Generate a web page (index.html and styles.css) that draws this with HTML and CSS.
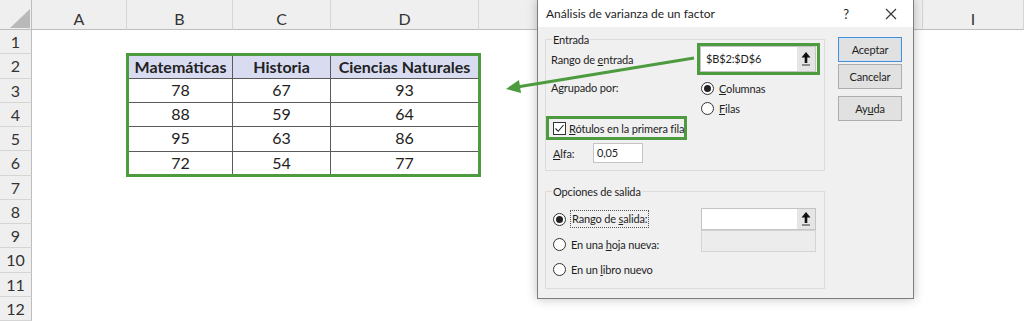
FILE: index.html
```html
<!DOCTYPE html>
<html lang="es">
<head>
<meta charset="UTF-8">
<title>Análisis de varianza de un factor</title>
<link rel="stylesheet" href="styles.css">
</head>
<body>

<div class="sheet">
    <div class="corner"><span class="corner-tri"></span></div>
    <div class="col-h">A</div>
    <div class="col-h">B</div>
    <div class="col-h">C</div>
    <div class="col-h">D</div>
    <div class="col-h">E</div>
    <div class="col-h">F</div>
    <div class="col-h">G</div>
    <div class="col-h">H</div>
    <div class="col-h">I</div>

    <div class="row-h">1</div>
    <div class="row-h">2</div>
    <div class="row-h">3</div>
    <div class="row-h">4</div>
    <div class="row-h">5</div>
    <div class="row-h">6</div>
    <div class="row-h">7</div>
    <div class="row-h">8</div>
    <div class="row-h">9</div>
    <div class="row-h">10</div>
    <div class="row-h">11</div>
    <div class="row-h">12</div>

    <div class="data">
        <div class="cell head">Matemáticas</div>
        <div class="cell head">Historia</div>
        <div class="cell head">Ciencias Naturales</div>
        <div class="cell">78</div>
        <div class="cell">67</div>
        <div class="cell">93</div>
        <div class="cell">88</div>
        <div class="cell">59</div>
        <div class="cell">64</div>
        <div class="cell">95</div>
        <div class="cell">63</div>
        <div class="cell">86</div>
        <div class="cell">72</div>
        <div class="cell">54</div>
        <div class="cell">77</div>
    </div>
</div>

<div class="dialog">
    <div class="dlg-title">
        <span class="dlg-caption">Análisis de varianza de un factor</span>
        <span class="dlg-help">?</span>
        <span class="dlg-close">
            <svg width="12" height="12" viewBox="0 0 12 12"><path d="M1 1 L11 11 M11 1 L1 11" stroke="#333" stroke-width="1.1" fill="none"/></svg>
        </span>
    </div>

    <div class="dlg-body">
        <div class="dlg-main">
            <div class="group group-in">
                <div class="group-title">Entrada</div>

                <div class="row row-range">
                    <span>Rango de <u>e</u>ntrada</span>
                    <div class="hl ref-box">
                        <div class="field ref-field">
                            <span class="ref-text">$B$2:$D$6</span>
                            <span class="ref-btn">
                                <svg width="10" height="14" viewBox="0 0 10 14"><path d="M5 0 L9.5 5.5 L6.3 5.5 L6.3 11 L3.7 11 L3.7 5.5 L0.5 5.5 Z" fill="#111"/><path d="M1 13 H9" stroke="#333" stroke-width="1"/></svg>
                            </span>
                        </div>
                    </div>
                </div>

                <div class="row row-group">
                    <span class="lbl-group">Agrupado por:</span>
                    <div class="radios">
                        <div class="opt"><span class="radio on"></span><span><u>C</u>olumnas</span></div>
                        <div class="opt"><span class="radio"></span><span><u>F</u>ilas</span></div>
                    </div>
                </div>

                <div class="hl check-box">
                    <span class="check">
                        <svg width="11" height="11" viewBox="0 0 11 11"><path d="M1.5 5.5 L4.2 8.3 L9.5 2" stroke="#222" stroke-width="1.1" fill="none"/></svg>
                    </span>
                    <span><u>R</u>ótulos en la primera fila</span>
                </div>

                <div class="row row-alpha">
                    <span class="lbl-alpha"><u>A</u>lfa:</span>
                    <div class="field alpha">0,05</div>
                </div>
            </div>

            <div class="group group-out">
                <div class="group-title">Opciones de salida</div>

                <div class="row out-row out-range">
                    <div class="opt"><span class="radio on"></span><span class="focus">Rango de <u>s</u>alida:</span></div>
                    <div class="field out-field">
                        <span class="ref-text"></span>
                        <span class="ref-btn">
                            <svg width="10" height="14" viewBox="0 0 10 14"><path d="M5 0 L9.5 5.5 L6.3 5.5 L6.3 11 L3.7 11 L3.7 5.5 L0.5 5.5 Z" fill="#111"/><path d="M1 13 H9" stroke="#333" stroke-width="1"/></svg>
                        </span>
                    </div>
                </div>

                <div class="row out-row out-sheet">
                    <div class="opt"><span class="radio"></span><span>En una <u>h</u>oja nueva:</span></div>
                    <div class="field out-field disabled"></div>
                </div>

                <div class="row out-row out-book">
                    <div class="opt"><span class="radio"></span><span>En un <u>l</u>ibro nuevo</span></div>
                </div>
            </div>
        </div>

        <div class="dlg-buttons">
            <div class="btn default">Aceptar</div>
            <div class="btn">Cancelar</div>
            <div class="btn help">Ay<u>u</u>da</div>
        </div>
    </div>
</div>

<!-- callout arrow from the input range to the data -->
<svg class="pointer" width="1024" height="321" viewBox="0 0 1024 321">
    <line x1="694" y1="58" x2="517" y2="87" stroke="#4e9a3f" stroke-width="3"/>
    <polygon points="506,89 521,93 519,80" fill="#4e9a3f"/>
</svg>

</body>
</html>
```

FILE: styles.css
```css
body {
    margin: 0;
    width: 1024px;
    height: 321px;
    overflow: hidden;
    position: relative;
    background: #fff;
    font-family: Lato, "Open Sans", sans-serif;
}

/* spreadsheet */

.sheet {
    display: grid;
    grid-template-columns: 32px 95px 106px 98px 148px 150px 98px 98px 98px 101px;
    grid-template-rows: 30px repeat(12, 24.25px);
}

.corner {
    background: #efefef;
    border-right: 1px solid #bdbdbd;
    border-bottom: 1px solid #bdbdbd;
    position: relative;
}

.corner-tri {
    position: absolute;
    left: 10px;
    top: 9px;
    width: 20px;
    height: 19px;
    background: #b9b9b9;
    clip-path: polygon(100% 0, 100% 100%, 0 100%);
}

.col-h {
    background: #efefef;
    border-right: 1px solid #d5d5d5;
    border-bottom: 1px solid #bdbdbd;
    display: flex;
    align-items: flex-end;
    justify-content: center;
    padding-bottom: 1px;
    font-size: 16px;
    color: #333;
}

.row-h {
    grid-column: 1;
    background: #efefef;
    border-right: 1px solid #bdbdbd;
    border-bottom: 1px solid #d5d5d5;
    text-align: center;
    font-size: 16px;
    line-height: 24px;
    color: #333;
}

.data {
    grid-column: 3 / 6;
    grid-row: 3 / 8;
    margin: -1px -2px -1px -1px;
    border: 3px solid #4e9a3f;
    display: grid;
    grid-template-columns: 104px 98px 1fr;
    grid-template-rows: 22.5px 24.25px 24.25px 24.25px 1fr;
}

.cell {
    border-right: 1px solid #5a5a5a;
    border-bottom: 1px solid #5a5a5a;
    text-align: center;
    font-size: 16px;
    line-height: 22px;
    color: #222;
}

.cell:nth-child(3n) {
    border-right: none;
}

.cell:nth-last-child(-n+3) {
    border-bottom: none;
}

.cell.head {
    background: #d9dcf1;
    font-weight: bold;
    line-height: 21px;
}

/* dialog */

.dialog {
    position: absolute;
    left: 537px;
    top: -1px;
    width: 377px;
    height: 300px;
    box-sizing: border-box;
    border: 1px solid #7d7d7d;
    background: #f0f0f0;
    box-shadow: 0 0 10px rgba(0,0,0,0.25);
    display: flex;
    flex-direction: column;
    font-family: Lato, "Open Sans", sans-serif;
    font-size: 11px;
    letter-spacing: -0.15px;
    color: #1e1e1e;
    white-space: nowrap;
}

.dlg-title {
    height: 27px;
    flex: none;
    background: #fff;
    display: flex;
    align-items: center;
    padding: 0 7px 0 8px;
}

.dlg-caption {
    font-size: 12px;
    letter-spacing: 0;
}

.dlg-help {
    margin-left: auto;
    width: 20px;
    text-align: center;
    font-size: 13px;
}

.dlg-close {
    margin-left: 20px;
    width: 30px;
    display: flex;
    justify-content: center;
}

.dlg-body {
    flex: 1;
    display: flex;
    padding-left: 7px;
}

.dlg-main {
    width: 280px;
}

.group {
    border: 1px solid #dcdcdc;
    padding: 0 4px 0 5px;
}

.group-in {
    margin-top: 12px;
    padding-bottom: 7px;
}

.group-out {
    margin-top: 20px;
    padding-bottom: 8px;
}

.group-title {
    margin: -8px 0 0 1px;
    padding: 0 1px;
    width: fit-content;
    background: #f0f0f0;
    line-height: 16px;
}

.row {
    display: flex;
    align-items: center;
}

u {
    text-underline-offset: 1px;
}

.hl {
    border: 3px solid #4e9a3f;
    box-sizing: border-box;
}

.row-range {
    margin-top: -5px;
    height: 32px;
    justify-content: space-between;
}

.ref-box {
    width: 123px;
    height: 32px;
    display: flex;
}

.field {
    background: #fff;
    border: 1px solid #c4c4c4;
    box-sizing: border-box;
}

.ref-field {
    flex: 1;
    display: flex;
    align-items: stretch;
    margin-right: 1px;
}

.ref-text {
    flex: 1;
    padding-left: 5px;
    line-height: 24px;
}

.ref-btn {
    width: 18px;
    background: #e5e5e5;
    display: flex;
    align-items: center;
    justify-content: center;
}

.row-group {
    align-items: flex-start;
    margin-top: 3px;
}

.lbl-group {
    margin-top: 2px;
    line-height: 16px;
}

.radios {
    margin-left: auto;
    width: 120px;
}

.opt {
    display: flex;
    align-items: center;
    height: 20px;
}

.radio {
    width: 13px;
    height: 13px;
    box-sizing: border-box;
    border: 1px solid #333;
    border-radius: 50%;
    background: #fff;
    margin: 0 5px 0 1px;
    display: flex;
    align-items: center;
    justify-content: center;
}

.radio.on::after {
    content: "";
    width: 7px;
    height: 7px;
    border-radius: 50%;
    background: #222;
}

.check-box {
    margin: -2px 0 0 -5px;
    width: 141px;
    height: 24px;
    display: flex;
    align-items: center;
    padding-left: 4px;
}

.check {
    width: 13px;
    height: 13px;
    box-sizing: border-box;
    border: 1px solid #333;
    background: #fff;
    margin-right: 3px;
    display: flex;
    align-items: center;
    justify-content: center;
}

.row-alpha {
    margin-top: 3px;
    height: 20px;
}

.lbl-alpha {
    margin-left: 2px;
    width: 40px;
}

.field.alpha {
    width: 50px;
    height: 20px;
    padding-left: 3px;
    line-height: 18px;
}

.out-row {
    justify-content: space-between;
    height: 22px;
}

.out-row .opt {
    margin-left: 1px;
}

.out-range {
    margin-top: 8px;
}

.out-sheet {
    align-items: flex-start;
}

.out-sheet .opt {
    margin-top: 4px;
}

.out-book {
    margin-top: 6px;
}

.focus {
    outline: 1px dotted #555;
    padding: 0 1px;
    line-height: 16px;
}

.out-field {
    width: 115px;
    height: 22px;
    margin-right: 4px;
    display: flex;
}

.out-field.disabled {
    background: #ececec;
    border: 1px solid #fff;
    outline: 1px solid #d4d4d4;
    outline-offset: -1px;
}

.dlg-buttons {
    margin-left: 13px;
    width: 64px;
    padding-top: 10px;
}

.btn {
    height: 25px;
    box-sizing: border-box;
    border: 1px solid #adadad;
    background: #e1e1e1;
    display: flex;
    align-items: center;
    justify-content: center;
    margin-bottom: 2px;
}

.btn.default {
    border-color: #4a8fd0;
    box-shadow: inset 0 0 0 1px #cfe2f5;
}

.btn.help {
    margin-top: 7px;
}

.pointer {
    position: absolute;
    left: 0;
    top: 0;
    pointer-events: none;
}
```
